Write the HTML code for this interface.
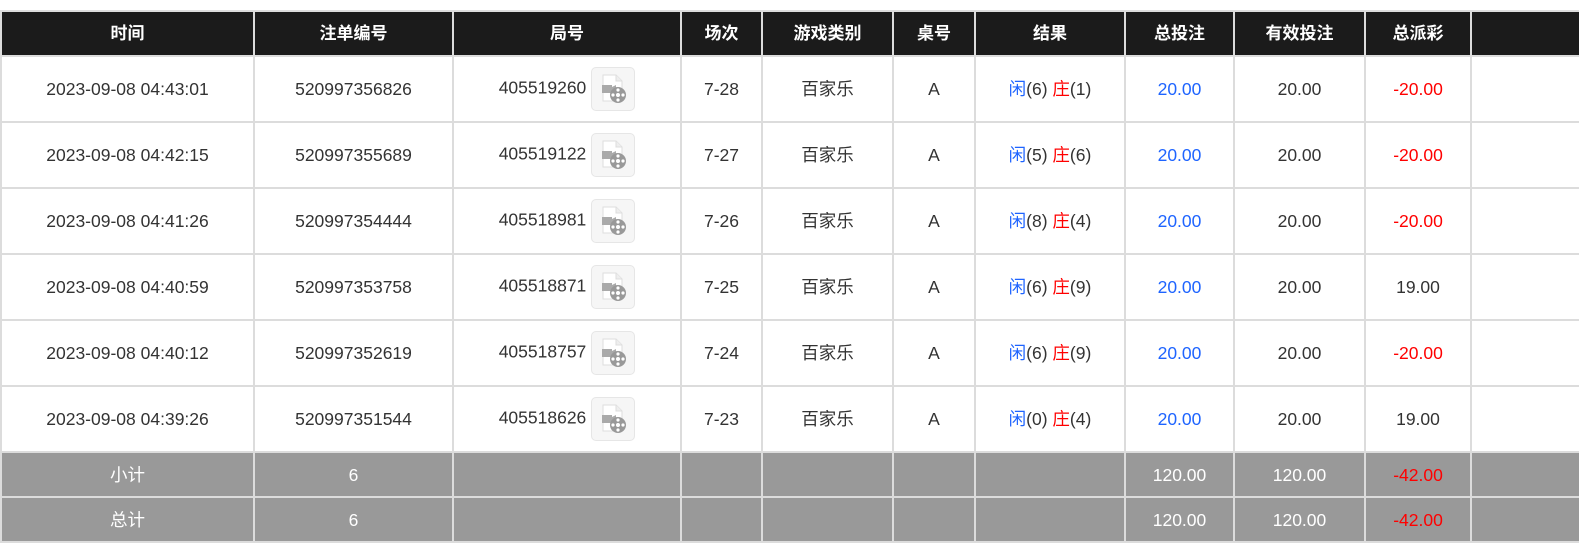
<!DOCTYPE html><html><head><meta charset="utf-8"><style>
body{margin:0;background:#fff;width:1579px;height:536px;overflow:hidden;font-family:"Liberation Sans","Noto Sans CJK SC",sans-serif;}
table{position:absolute;top:10px;left:0;width:1594px;border-collapse:collapse;table-layout:fixed;}
td,th{border:2px solid #dcdcdc;text-align:center;font-size:17.5px;color:#333;padding:0;line-height:20px;vertical-align:middle;}
th{background:#1b1b1b;color:#fff;height:43px;font-weight:bold;border-top:2px solid #ddd;font-size:17px;}
tbody td{height:64px;background:#fff;}
tr.f td{background:#999;color:#fff;height:43px;}
.b{color:#1e64ff}.r{color:#f00}
.ic{display:inline-block;width:42px;height:42px;vertical-align:middle;margin-left:5px;border:1px solid #e6e6e6;border-radius:5px;background:#f6f6f6;position:relative}
.ic svg{position:absolute;left:5px;top:5px}
</style></head><body>
<table>
<colgroup><col style="width:253px"><col style="width:199px"><col style="width:228px"><col style="width:81px"><col style="width:131px"><col style="width:82px"><col style="width:150px"><col style="width:109px"><col style="width:131px"><col style="width:106px"><col style="width:124px"></colgroup>
<thead><tr><th>时间</th><th>注单编号</th><th>局号</th><th>场次</th><th>游戏类别</th><th>桌号</th><th>结果</th><th>总投注</th><th>有效投注</th><th>总派彩</th><th></th></tr></thead>
<tbody>
<tr><td>2023-09-08 04:43:01</td><td>520997356826</td><td>405519260<span class="ic"><svg width="32" height="32" viewBox="0 0 32 32"><path d="M6 2h13l6 6v20H6z" fill="#fff" stroke="#ddd"/><path d="M19 2v6h6" fill="#eee" stroke="#ddd"/><rect x="5" y="12" width="10" height="8" fill="#aaa"/><path d="M15 14l4-2v9l-4-2z" fill="#aaa"/><circle cx="21" cy="22" r="8" fill="#999"/><circle cx="21" cy="22" r="2" fill="#fff"/><circle cx="21" cy="17" r="1.6" fill="#fff"/><circle cx="21" cy="27" r="1.6" fill="#fff"/><circle cx="16" cy="22" r="1.6" fill="#fff"/><circle cx="26" cy="22" r="1.6" fill="#fff"/></svg></span></td><td>7-28</td><td>百家乐</td><td>A</td><td><span class="b">闲</span>(6) <span class="r">庄</span>(1)</td><td class="b">20.00</td><td>20.00</td><td class="r">-20.00</td><td></td></tr>
<tr><td>2023-09-08 04:42:15</td><td>520997355689</td><td>405519122<span class="ic"><svg width="32" height="32" viewBox="0 0 32 32"><path d="M6 2h13l6 6v20H6z" fill="#fff" stroke="#ddd"/><path d="M19 2v6h6" fill="#eee" stroke="#ddd"/><rect x="5" y="12" width="10" height="8" fill="#aaa"/><path d="M15 14l4-2v9l-4-2z" fill="#aaa"/><circle cx="21" cy="22" r="8" fill="#999"/><circle cx="21" cy="22" r="2" fill="#fff"/><circle cx="21" cy="17" r="1.6" fill="#fff"/><circle cx="21" cy="27" r="1.6" fill="#fff"/><circle cx="16" cy="22" r="1.6" fill="#fff"/><circle cx="26" cy="22" r="1.6" fill="#fff"/></svg></span></td><td>7-27</td><td>百家乐</td><td>A</td><td><span class="b">闲</span>(5) <span class="r">庄</span>(6)</td><td class="b">20.00</td><td>20.00</td><td class="r">-20.00</td><td></td></tr>
<tr><td>2023-09-08 04:41:26</td><td>520997354444</td><td>405518981<span class="ic"><svg width="32" height="32" viewBox="0 0 32 32"><path d="M6 2h13l6 6v20H6z" fill="#fff" stroke="#ddd"/><path d="M19 2v6h6" fill="#eee" stroke="#ddd"/><rect x="5" y="12" width="10" height="8" fill="#aaa"/><path d="M15 14l4-2v9l-4-2z" fill="#aaa"/><circle cx="21" cy="22" r="8" fill="#999"/><circle cx="21" cy="22" r="2" fill="#fff"/><circle cx="21" cy="17" r="1.6" fill="#fff"/><circle cx="21" cy="27" r="1.6" fill="#fff"/><circle cx="16" cy="22" r="1.6" fill="#fff"/><circle cx="26" cy="22" r="1.6" fill="#fff"/></svg></span></td><td>7-26</td><td>百家乐</td><td>A</td><td><span class="b">闲</span>(8) <span class="r">庄</span>(4)</td><td class="b">20.00</td><td>20.00</td><td class="r">-20.00</td><td></td></tr>
<tr><td>2023-09-08 04:40:59</td><td>520997353758</td><td>405518871<span class="ic"><svg width="32" height="32" viewBox="0 0 32 32"><path d="M6 2h13l6 6v20H6z" fill="#fff" stroke="#ddd"/><path d="M19 2v6h6" fill="#eee" stroke="#ddd"/><rect x="5" y="12" width="10" height="8" fill="#aaa"/><path d="M15 14l4-2v9l-4-2z" fill="#aaa"/><circle cx="21" cy="22" r="8" fill="#999"/><circle cx="21" cy="22" r="2" fill="#fff"/><circle cx="21" cy="17" r="1.6" fill="#fff"/><circle cx="21" cy="27" r="1.6" fill="#fff"/><circle cx="16" cy="22" r="1.6" fill="#fff"/><circle cx="26" cy="22" r="1.6" fill="#fff"/></svg></span></td><td>7-25</td><td>百家乐</td><td>A</td><td><span class="b">闲</span>(6) <span class="r">庄</span>(9)</td><td class="b">20.00</td><td>20.00</td><td>19.00</td><td></td></tr>
<tr><td>2023-09-08 04:40:12</td><td>520997352619</td><td>405518757<span class="ic"><svg width="32" height="32" viewBox="0 0 32 32"><path d="M6 2h13l6 6v20H6z" fill="#fff" stroke="#ddd"/><path d="M19 2v6h6" fill="#eee" stroke="#ddd"/><rect x="5" y="12" width="10" height="8" fill="#aaa"/><path d="M15 14l4-2v9l-4-2z" fill="#aaa"/><circle cx="21" cy="22" r="8" fill="#999"/><circle cx="21" cy="22" r="2" fill="#fff"/><circle cx="21" cy="17" r="1.6" fill="#fff"/><circle cx="21" cy="27" r="1.6" fill="#fff"/><circle cx="16" cy="22" r="1.6" fill="#fff"/><circle cx="26" cy="22" r="1.6" fill="#fff"/></svg></span></td><td>7-24</td><td>百家乐</td><td>A</td><td><span class="b">闲</span>(6) <span class="r">庄</span>(9)</td><td class="b">20.00</td><td>20.00</td><td class="r">-20.00</td><td></td></tr>
<tr><td>2023-09-08 04:39:26</td><td>520997351544</td><td>405518626<span class="ic"><svg width="32" height="32" viewBox="0 0 32 32"><path d="M6 2h13l6 6v20H6z" fill="#fff" stroke="#ddd"/><path d="M19 2v6h6" fill="#eee" stroke="#ddd"/><rect x="5" y="12" width="10" height="8" fill="#aaa"/><path d="M15 14l4-2v9l-4-2z" fill="#aaa"/><circle cx="21" cy="22" r="8" fill="#999"/><circle cx="21" cy="22" r="2" fill="#fff"/><circle cx="21" cy="17" r="1.6" fill="#fff"/><circle cx="21" cy="27" r="1.6" fill="#fff"/><circle cx="16" cy="22" r="1.6" fill="#fff"/><circle cx="26" cy="22" r="1.6" fill="#fff"/></svg></span></td><td>7-23</td><td>百家乐</td><td>A</td><td><span class="b">闲</span>(0) <span class="r">庄</span>(4)</td><td class="b">20.00</td><td>20.00</td><td>19.00</td><td></td></tr>
<tr class="f"><td>小计</td><td>6</td><td></td><td></td><td></td><td></td><td></td><td>120.00</td><td>120.00</td><td><span class="r">-42.00</span></td><td></td></tr>
<tr class="f"><td>总计</td><td>6</td><td></td><td></td><td></td><td></td><td></td><td>120.00</td><td>120.00</td><td><span class="r">-42.00</span></td><td></td></tr>
</tbody></table>
</body></html>
